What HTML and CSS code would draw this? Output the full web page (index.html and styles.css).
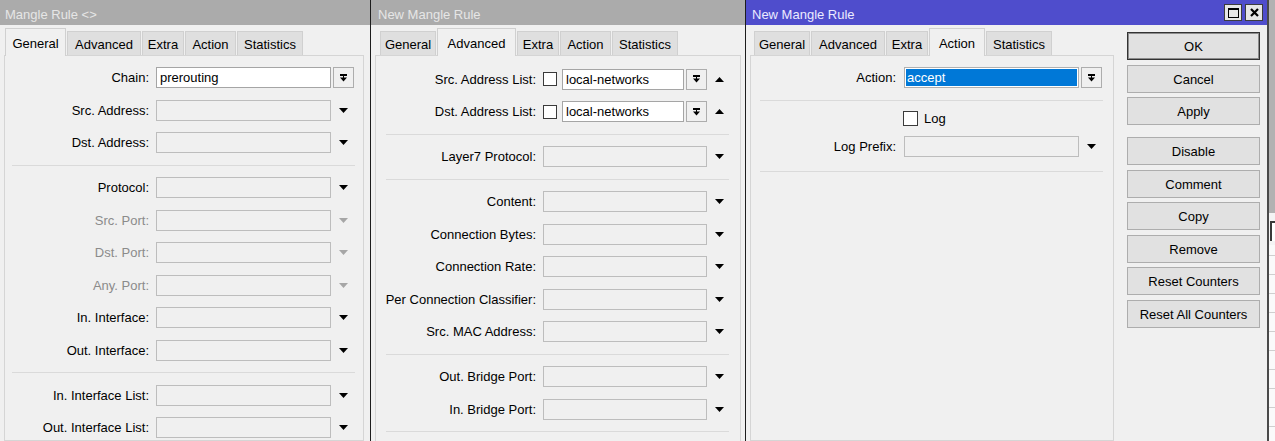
FILE: index.html
```html
<!DOCTYPE html>
<html>
<head>
<meta charset="utf-8">
<title>Mangle Rule</title>
<link rel="stylesheet" href="styles.css">
</head>
<body>
<div class="screen">

  <!-- Window 1 -->
  <section class="win win1">
    <div class="titlebar"><span class="title">Mangle Rule &lt;&gt;</span></div>
    <div class="wbody">
      <div class="tabpane">
        <div class="tabs">
          <div class="tab t-general active">General</div>
          <div class="tab t-advanced">Advanced</div>
          <div class="tab t-extra">Extra</div>
          <div class="tab t-action">Action</div>
          <div class="tab t-statistics">Statistics</div>
        </div>
        <div class="page">
          <div class="sec">
            <div class="row"><span class="lbl">Chain:</span><div class="ctl"><div class="field white">prerouting</div></div><div class="slot"><span class="dbtn"><svg width="7" height="8" viewBox="0 0 7 8"><rect x="0" y="0" width="7" height="2"/><rect x="3" y="2" width="1" height="2"/><path d="M0 3.5h7L3.5 7.5z"/></svg></span></div></div>
            <div class="row"><span class="lbl">Src. Address:</span><div class="ctl"><div class="field"></div></div><div class="slot"><svg class="arr" width="9" height="5" viewBox="0 0 9 5"><path d="M0 0h9L4.5 5z"/></svg></div></div>
            <div class="row"><span class="lbl">Dst. Address:</span><div class="ctl"><div class="field"></div></div><div class="slot"><svg class="arr" width="9" height="5" viewBox="0 0 9 5"><path d="M0 0h9L4.5 5z"/></svg></div></div>
          </div>
          <div class="sep"></div>
          <div class="sec">
            <div class="row"><span class="lbl">Protocol:</span><div class="ctl"><div class="field"></div></div><div class="slot"><svg class="arr" width="9" height="5" viewBox="0 0 9 5"><path d="M0 0h9L4.5 5z"/></svg></div></div>
            <div class="row dis"><span class="lbl">Src. Port:</span><div class="ctl"><div class="field"></div></div><div class="slot"><svg class="arr" width="9" height="5" viewBox="0 0 9 5"><path d="M0 0h9L4.5 5z"/></svg></div></div>
            <div class="row dis"><span class="lbl">Dst. Port:</span><div class="ctl"><div class="field"></div></div><div class="slot"><svg class="arr" width="9" height="5" viewBox="0 0 9 5"><path d="M0 0h9L4.5 5z"/></svg></div></div>
            <div class="row dis"><span class="lbl">Any. Port:</span><div class="ctl"><div class="field"></div></div><div class="slot"><svg class="arr" width="9" height="5" viewBox="0 0 9 5"><path d="M0 0h9L4.5 5z"/></svg></div></div>
            <div class="row"><span class="lbl">In. Interface:</span><div class="ctl"><div class="field"></div></div><div class="slot"><svg class="arr" width="9" height="5" viewBox="0 0 9 5"><path d="M0 0h9L4.5 5z"/></svg></div></div>
            <div class="row"><span class="lbl">Out. Interface:</span><div class="ctl"><div class="field"></div></div><div class="slot"><svg class="arr" width="9" height="5" viewBox="0 0 9 5"><path d="M0 0h9L4.5 5z"/></svg></div></div>
          </div>
          <div class="sep"></div>
          <div class="sec">
            <div class="row"><span class="lbl">In. Interface List:</span><div class="ctl"><div class="field"></div></div><div class="slot"><svg class="arr" width="9" height="5" viewBox="0 0 9 5"><path d="M0 0h9L4.5 5z"/></svg></div></div>
            <div class="row"><span class="lbl">Out. Interface List:</span><div class="ctl"><div class="field"></div></div><div class="slot"><svg class="arr" width="9" height="5" viewBox="0 0 9 5"><path d="M0 0h9L4.5 5z"/></svg></div></div>
          </div>
        </div>
      </div>
    </div>
  </section>

  <!-- Window 2 -->
  <section class="win win2">
    <div class="titlebar"><span class="title">New Mangle Rule</span></div>
    <div class="wbody">
      <div class="tabpane">
        <div class="tabs">
          <div class="tab t-general">General</div>
          <div class="tab t-advanced active">Advanced</div>
          <div class="tab t-extra">Extra</div>
          <div class="tab t-action">Action</div>
          <div class="tab t-statistics">Statistics</div>
        </div>
        <div class="page">
          <div class="sec">
            <div class="row"><span class="lbl">Src. Address List:</span><div class="ctl"><span class="cb"></span><div class="field white">local-networks</div><span class="dbtn inctl"><svg width="7" height="8" viewBox="0 0 7 8"><rect x="0" y="0" width="7" height="2"/><rect x="3" y="2" width="1" height="2"/><path d="M0 3.5h7L3.5 7.5z"/></svg></span></div><div class="slot"><svg class="arr" width="9" height="5" viewBox="0 0 9 5"><path d="M0 5h9L4.5 0z"/></svg></div></div>
            <div class="row"><span class="lbl">Dst. Address List:</span><div class="ctl"><span class="cb"></span><div class="field white">local-networks</div><span class="dbtn inctl"><svg width="7" height="8" viewBox="0 0 7 8"><rect x="0" y="0" width="7" height="2"/><rect x="3" y="2" width="1" height="2"/><path d="M0 3.5h7L3.5 7.5z"/></svg></span></div><div class="slot"><svg class="arr" width="9" height="5" viewBox="0 0 9 5"><path d="M0 5h9L4.5 0z"/></svg></div></div>
          </div>
          <div class="sep"></div>
          <div class="sec">
            <div class="row"><span class="lbl">Layer7 Protocol:</span><div class="ctl"><div class="field"></div></div><div class="slot"><svg class="arr" width="9" height="5" viewBox="0 0 9 5"><path d="M0 0h9L4.5 5z"/></svg></div></div>
          </div>
          <div class="sep"></div>
          <div class="sec">
            <div class="row"><span class="lbl">Content:</span><div class="ctl"><div class="field"></div></div><div class="slot"><svg class="arr" width="9" height="5" viewBox="0 0 9 5"><path d="M0 0h9L4.5 5z"/></svg></div></div>
            <div class="row"><span class="lbl">Connection Bytes:</span><div class="ctl"><div class="field"></div></div><div class="slot"><svg class="arr" width="9" height="5" viewBox="0 0 9 5"><path d="M0 0h9L4.5 5z"/></svg></div></div>
            <div class="row"><span class="lbl">Connection Rate:</span><div class="ctl"><div class="field"></div></div><div class="slot"><svg class="arr" width="9" height="5" viewBox="0 0 9 5"><path d="M0 0h9L4.5 5z"/></svg></div></div>
            <div class="row"><span class="lbl">Per Connection Classifier:</span><div class="ctl"><div class="field"></div></div><div class="slot"><svg class="arr" width="9" height="5" viewBox="0 0 9 5"><path d="M0 0h9L4.5 5z"/></svg></div></div>
            <div class="row"><span class="lbl">Src. MAC Address:</span><div class="ctl"><div class="field"></div></div><div class="slot"><svg class="arr" width="9" height="5" viewBox="0 0 9 5"><path d="M0 0h9L4.5 5z"/></svg></div></div>
          </div>
          <div class="sep"></div>
          <div class="sec">
            <div class="row"><span class="lbl">Out. Bridge Port:</span><div class="ctl"><div class="field"></div></div><div class="slot"><svg class="arr" width="9" height="5" viewBox="0 0 9 5"><path d="M0 0h9L4.5 5z"/></svg></div></div>
            <div class="row"><span class="lbl">In. Bridge Port:</span><div class="ctl"><div class="field"></div></div><div class="slot"><svg class="arr" width="9" height="5" viewBox="0 0 9 5"><path d="M0 0h9L4.5 5z"/></svg></div></div>
          </div>
          <div class="sep"></div>
        </div>
      </div>
    </div>
  </section>

  <!-- Window 3 (active) -->
  <section class="win win3">
    <div class="titlebar">
      <span class="title">New Mangle Rule</span>
      <div class="tbtns">
        <span class="tbtn"><svg width="11" height="10" viewBox="0 0 11 10"><rect x="0.5" y="0.5" width="10" height="9" fill="none" stroke="#000" stroke-width="1"/><rect x="0" y="0" width="11" height="2"/></svg></span>
        <span class="tbtn"><svg width="9" height="9" viewBox="0 0 9 9"><path d="M1 1L8 8M8 1L1 8" stroke="#000" stroke-width="2.2" fill="none"/></svg></span>
      </div>
    </div>
    <div class="wbody">
      <div class="tabpane">
        <div class="tabs">
          <div class="tab t-general">General</div>
          <div class="tab t-advanced">Advanced</div>
          <div class="tab t-extra">Extra</div>
          <div class="tab t-action active">Action</div>
          <div class="tab t-statistics">Statistics</div>
        </div>
        <div class="page">
          <div class="sec">
            <div class="row"><span class="lbl">Action:</span><div class="ctl"><div class="field white sel"><span class="hl">accept</span></div></div><div class="slot"><span class="dbtn"><svg width="7" height="8" viewBox="0 0 7 8"><rect x="0" y="0" width="7" height="2"/><rect x="3" y="2" width="1" height="2"/><path d="M0 3.5h7L3.5 7.5z"/></svg></span></div></div>
          </div>
          <div class="sep sep-tb"></div>
          <div class="sec sec-log">
            <div class="row row-log"><span class="lbl"></span><div class="ctl"><span class="cb cb-log"></span><span class="cbtext">Log</span></div></div>
            <div class="row"><span class="lbl">Log Prefix:</span><div class="ctl"><div class="field"></div></div><div class="slot"><svg class="arr" width="9" height="5" viewBox="0 0 9 5"><path d="M0 0h9L4.5 5z"/></svg></div></div>
          </div>
          <div class="sep sep-lt"></div>
        </div>
      </div>
      <div class="actions">
        <div class="btn default">OK</div>
        <div class="btn">Cancel</div>
        <div class="btn">Apply</div>
        <div class="btn spaced">Disable</div>
        <div class="btn">Comment</div>
        <div class="btn">Copy</div>
        <div class="btn">Remove</div>
        <div class="btn">Reset Counters</div>
        <div class="btn">Reset All Counters</div>
      </div>
    </div>
  </section>

  <!-- background window sliver -->
  <div class="bgstrip">
    <div class="bg-top"></div>
    <div class="bg-box"></div>
    <div class="bg-grid">
      <div class="bg-line"></div>
      <div class="bg-line"></div>
      <div class="bg-line"></div>
      <div class="bg-line"></div>
      <div class="bg-line"></div>
      <div class="bg-line"></div>
      <div class="bg-line"></div>
      <div class="bg-line"></div>
      <div class="bg-line"></div>
      <div class="bg-line"></div>
    </div>
  </div>

</div>
</body>
</html>
```

FILE: styles.css
```css
* { box-sizing: border-box; }

html, body {
  margin: 0;
  padding: 0;
}

body {
  width: 1275px;
  height: 441px;
  overflow: hidden;
  font-family: "Liberation Sans", Arial, sans-serif;
  font-size: 13px;
  color: #000;
  background: #f0f0f0;
}

.screen {
  display: flex;
  height: 441px;
  overflow: hidden;
}

/* ---------- windows ---------- */
.win {
  flex: none;
  display: flex;
  flex-direction: column;
  height: 441px;
  background: #f0f0f0;
}

.win1 { width: 371px; border-right: 1px solid #1c1c1c; --lw: 144px; --lg: 7px; --cw: 175px; }
.win2 { width: 375px; border-right: 1px solid #1c1c1c; --lw: 160px; --lg: 7px; --cw: 164px; }
.win3 { width: 523px; border-right: 2px solid #4a4a4a; --lw: 145px; --lg: 8px; --cw: 175px; }

.titlebar {
  flex: none;
  height: 25px;
  display: flex;
  align-items: flex-start;
  background: #ababab;
  color: #e6e6e6;
  padding-left: 5px;
}

.win2 .titlebar { padding-left: 7px; }
.win3 .titlebar { padding-left: 6px; padding-right: 4px; background: #4f4dcc; color: #ecebff; }

.title {
  padding-top: 6px;
  line-height: 18px;
  white-space: nowrap;
}

.tbtns {
  margin-left: auto;
  margin-top: 4px;
  display: flex;
  gap: 3px;
}

.tbtn {
  width: 18px;
  height: 17px;
  border: 1px solid #3c3c3c;
  background: #e6e6e6;
  display: flex;
  align-items: center;
  justify-content: center;
}

.wbody {
  flex: 1;
  display: flex;
  padding-top: 3px;
  min-height: 0;
}

/* ---------- tab control ---------- */
.tabpane {
  flex: none;
  margin-left: 4px;
  display: flex;
  flex-direction: column;
}

.win1 .tabpane { width: 360px; }
.win2 .tabpane { width: 366px; }
.win3 .tabpane { width: 364px; }

.tabs {
  flex: none;
  height: 27px;
  display: flex;
  align-items: flex-end;
  gap: 1px;
}

.win1 .tabs { padding-left: 1px; }
.win2 .tabs { padding-left: 5px; }
.win3 .tabs { padding-left: 4px; }

.t-general { --w: 56px; }
.t-advanced { --w: 74px; }
.t-extra { --w: 42px; }
.t-action { --w: 51px; }
.t-statistics { --w: 66px; }

.tab {
  flex: none;
  width: var(--w);
  height: 24px;
  border: 1px solid #d0d0d0;
  border-bottom: none;
  background: #dfdfdf;
  text-align: center;
  padding-top: 3px;
  line-height: 20px;
  white-space: nowrap;
}

.tab.active {
  width: calc(var(--w) + 5px);
  height: 28px;
  margin-bottom: -1px;
  padding-top: 5px;
  background: #f0f0f0;
  position: relative;
  z-index: 1;
}

.page {
  flex: 1;
  border: 1px solid #d5d5d5;
  background: #f0f0f0;
  padding-top: 11px;
}

.win2 .page { padding-top: 12.5px; }

/* ---------- form rows ---------- */
.sec {
  display: flex;
  flex-direction: column;
  gap: 11.5px;
}

.sep {
  height: 1px;
  background: #dadada;
  margin: 11.5px 8px 11.5px 7px;
}

.win2 .sep { margin-left: 10px; margin-right: 11px; }
.win3 .sep { margin-left: 9px; margin-right: 10px; }
.win3 .sep-tb { margin-bottom: 10px; }
.win3 .sep-lt { margin-top: 13.5px; }

.sec-log { gap: 10.5px; }

.row {
  display: flex;
  align-items: center;
  height: 21px;
}

.row-log { height: 15px; }

.lbl {
  flex: none;
  width: var(--lw);
  margin-right: var(--lg);
  text-align: right;
  white-space: nowrap;
  line-height: 21px;
}

.ctl {
  flex: none;
  width: var(--cw);
  height: 21px;
  display: flex;
  align-items: center;
}

.row-log .ctl { height: 15px; }

.field {
  flex: 1;
  min-width: 0;
  height: 21px;
  border: 1px solid #bdbdbd;
  background: #f0f0f0;
  padding-left: 3px;
  line-height: 19px;
  white-space: nowrap;
  overflow: hidden;
}

.field.white {
  background: #fff;
  border-color: #a5a5a5;
}

.field.sel {
  padding: 1px;
  border-color: #b0b0b0;
}

.hl {
  display: block;
  height: 100%;
  background: #0078d7;
  color: #fff;
  padding-left: 1px;
  line-height: 17px;
}

.slot {
  flex: none;
  width: 21px;
  height: 21px;
  margin-left: 2px;
  display: flex;
  align-items: center;
  justify-content: center;
}

.arr { fill: #000; display: block; }
.dis .lbl { color: #8b8b8b; }
.dis .arr { fill: #a6a6a6; }

.dbtn {
  flex: none;
  width: 21px;
  height: 21px;
  border: 1px solid #adadad;
  background: #f0f0f0;
  display: flex;
  align-items: center;
  justify-content: center;
}

.dbtn.inctl { margin-left: 2px; }

.cb {
  flex: none;
  width: 14px;
  height: 14px;
  border: 1px solid #3a3a3a;
  background: #fff;
  margin-right: 5px;
}

.cb-log {
  width: 15px;
  height: 15px;
  margin-left: -1px;
  margin-right: 6px;
}

.cbtext {
  line-height: 15px;
  white-space: nowrap;
}

/* ---------- action buttons ---------- */
.actions {
  flex: none;
  width: 133px;
  margin-left: 13px;
  padding-top: 4px;
  display: flex;
  flex-direction: column;
  gap: 4.5px;
}

.btn {
  flex: none;
  height: 28px;
  border: 1px solid #adadad;
  background: #e1e1e1;
  text-align: center;
  padding-top: 1px;
  line-height: 25px;
  white-space: nowrap;
}

.btn.default {
  border-color: #333;
  box-shadow: inset 0 0 0 1px #8c8c8c;
}

.btn.spaced { margin-top: 7.5px; }

/* ---------- background window sliver ---------- */
.bgstrip {
  flex: 1;
  display: flex;
  flex-direction: column;
  background: #f4f4f4;
}

.bg-top {
  flex: none;
  height: 213px;
  background: #b2b2b2;
}

.bg-box {
  flex: none;
  height: 20px;
  margin: 8px 0 4px 1px;
  border-top: 2px solid #3a3a3a;
  border-left: 2px solid #3a3a3a;
  background: #fff;
}

.bg-grid {
  flex: 1;
  display: flex;
  flex-direction: column;
  gap: 18px;
  padding-top: 10px;
  background: #fafafa;
}

.bg-line {
  height: 1px;
  background: #cfcfcf;
}
```
